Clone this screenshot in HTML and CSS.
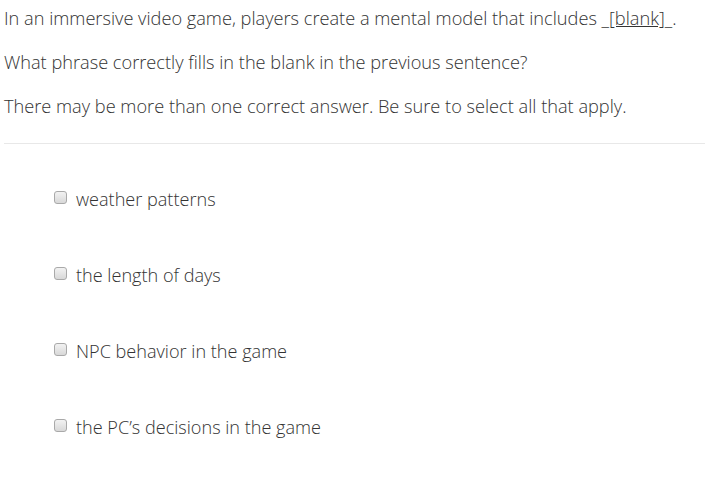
FILE: index.html
```html
<!DOCTYPE html>
<html>
<head>
<meta charset="utf-8">
<link rel="stylesheet" href="styles.css">
</head>
<body>
<div class="question">
  <p class="line">In an immersive video game, players create a mental model that includes _<u>[blank]</u>_.</p>
  <p class="line">What phrase correctly fills in the blank in the previous sentence?</p>
  <p class="line">There may be more than one correct answer. Be sure to select all that apply.</p>
</div>
<ul class="options">
  <li class="option"><span class="box"></span><span class="label">weather patterns</span></li>
  <li class="option"><span class="box"></span><span class="label">the length of days</span></li>
  <li class="option"><span class="box"></span><span class="label">NPC behavior in the game</span></li>
  <li class="option"><span class="box"></span><span class="label">the PC’s decisions in the game</span></li>
</ul>
</body>
</html>
```
FILE: styles.css
```css
html, body { margin: 0; padding: 0; background: #fff; }
body {
  font-family: "Open Sans", "DejaVu Sans", sans-serif;
  color: #333;
}
.question {
  margin-left: 4px;
  padding: 6px 0 25px 0;
  border-bottom: 1px solid #e8e8e8;
  font-size: 18.2px;
  font-weight: 350;
}
.line {
  margin: 0 0 20px 0;
  line-height: 24px;
}
.line:last-child { margin-bottom: 0; }
.options {
  list-style: none;
  margin: 0;
  padding: 43px 0 0 54px;
  font-size: 18.1px;
  font-weight: 350;
}
.option {
  display: flex;
  align-items: center;
  height: 24px;
  margin-bottom: 52px;
}
.box {
  width: 11px;
  height: 11px;
  border: 1px solid #a9a9a9;
  border-radius: 3px;
  background: linear-gradient(#f2f2f2, #d8d8d8);
  margin-right: 9px;
  flex: none;
  position: relative;
  top: -2px;
}
.label { line-height: 24px; }
```
